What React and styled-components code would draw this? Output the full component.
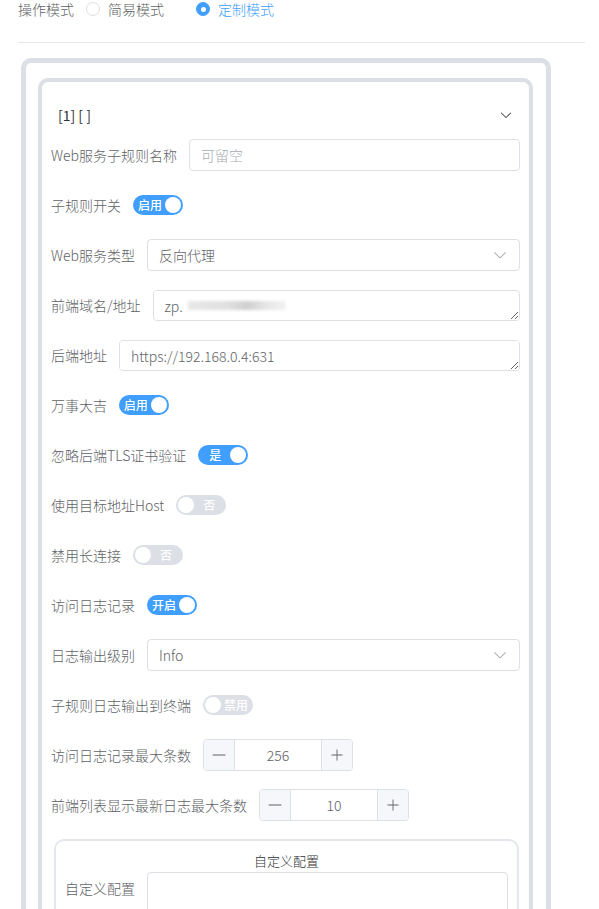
import React from "react";
import styled, { createGlobalStyle } from "styled-components";

const Global = createGlobalStyle`
  html, body { margin: 0; padding: 0; overflow: hidden; background: #fff; }
  body { font-family: "Noto Sans CJK SC", "Liberation Sans", sans-serif; font-size: 14px; font-weight: 300; color: #606266; }
  * { box-sizing: border-box; }
`;

const Page = styled.div`
  padding: 0 14px 0 18px;
`;

const TopRow = styled.div`
  display: flex;
  align-items: center;
  height: 18px;
  line-height: 18px;
  font-size: 14px;
`;

const ModeLabel = styled.span`
  padding-right: 12px;
  color: #606266;
`;

const Radio = styled.label`
  display: inline-flex;
  align-items: center;
  margin-right: 32px;
  color: ${(p) => (p.$checked ? "#409eff" : "#606266")};
`;

const RadioDot = styled.span`
  position: relative;
  width: 14px;
  height: 14px;
  border-radius: 50%;
  border: 1px solid ${(p) => (p.$checked ? "#409eff" : "#dcdfe6")};
  background: ${(p) => (p.$checked ? "#409eff" : "#fff")};
  &::after {
    content: "";
    display: ${(p) => (p.$checked ? "block" : "none")};
    position: absolute;
    left: 50%;
    top: 50%;
    width: 5px;
    height: 5px;
    margin: -2.5px 0 0 -2.5px;
    border-radius: 50%;
    background: #fff;
  }
`;

const RadioText = styled.span`
  padding-left: 8px;
`;

const Divider = styled.div`
  height: 1px;
  margin-top: 24px;
  background: #e4e7ed;
`;

const OuterCard = styled.div`
  margin: 15px 0 0 3px;
  width: 530px;
  border: 5px solid #dcdfe6;
  border-radius: 10px;
  padding: 15px 13px 20px 12px;
`;

const InnerCard = styled.div`
  border: 4px solid #dcdfe6;
  border-radius: 10px;
  padding: 9px 9px;
`;

const Header = styled.div`
  height: 48px;
  display: flex;
  align-items: center;
  justify-content: space-between;
  padding: 0 7px 0 7px;
  font-size: 14px;
  font-weight: 400;
  color: #303133;
`;

const FormRow = styled.div`
  display: flex;
  align-items: flex-start;
  min-height: 32px;
  margin-bottom: 18px;
`;

const Label = styled.div`
  flex: none;
  line-height: 32px;
  padding-right: 12px;
  font-size: 14px;
  color: #606266;
  white-space: nowrap;
`;

const Control = styled.div`
  flex: 1;
  min-width: 0;
  min-height: 32px;
  display: flex;
  align-items: center;
  position: relative;
`;

const TextInput = styled.input`
  width: 100%;
  height: 32px;
  border: 1px solid #dcdfe6;
  border-radius: 4px;
  padding: 0 11px;
  font: inherit;
  font-size: 14px;
  color: #606266;
  outline: none;
  &::placeholder { color: #a8abb2; }
`;

const SelectBox = styled.div`
  width: 100%;
  height: 32px;
  border: 1px solid #dcdfe6;
  border-radius: 4px;
  padding: 0 11px 0 11px;
  display: flex;
  align-items: center;
  justify-content: space-between;
  color: #606266;
  font-size: 14px;
`;

const TextArea = styled.textarea`
  display: block;
  width: 100%;
  height: ${(p) => p.$h || 31}px;
  border: 1px solid #dcdfe6;
  border-radius: 4px;
  padding: 5px 11px;
  line-height: 1.5;
  font: inherit;
  font-size: 14px;
  color: #606266;
  resize: vertical;
  outline: none;
`;

const Redact = styled.span`
  position: absolute;
  left: 35px;
  top: 12px;
  width: 98px;
  height: 9px;
  background: linear-gradient(90deg, #e8e8e8 0%, #e0e0e0 40%, #cfcfcf 60%, #e6e6e6 80%, #f3f3f3 100%);
  filter: blur(1.5px);
  pointer-events: none;
`;

const SwitchTrack = styled.span`
  display: inline-flex;
  align-items: center;
  flex-direction: ${(p) => (p.$on ? "row" : "row-reverse")};
  width: 50px;
  height: 20px;
  padding: 0 2px;
  border-radius: 10px;
  background: ${(p) => (p.$on ? "#409eff" : "#dcdfe6")};
`;

const SwitchText = styled.span`
  flex: 1;
  text-align: center;
  font-size: 12px;
  font-weight: 500;
  line-height: 20px;
  color: #fff;
`;

const Knob = styled.span`
  width: 16px;
  height: 16px;
  border-radius: 50%;
  background: #fff;
  flex: none;
`;

const NumberBox = styled.div`
  display: flex;
  width: 150px;
  height: 32px;
  border: 1px solid #dcdfe6;
  border-radius: 4px;
  overflow: hidden;
`;

const StepBtn = styled.span`
  width: 31px;
  flex: none;
  display: flex;
  align-items: center;
  justify-content: center;
  background: #f5f7fa;
  color: #606266;
  border-${(p) => (p.$side === "left" ? "right" : "left")}: 1px solid #dcdfe6;
`;

const NumberValue = styled.span`
  flex: 1;
  text-align: center;
  line-height: 30px;
  font-size: 14px;
  color: #606266;
`;

const NestedCard = styled.div`
  margin: 0 1px 0 3px;
  border: 2px solid #e4e7ed;
  border-radius: 10px;
  padding: 9px 9px;
`;

const NestedTitle = styled.div`
  text-align: center;
  font-size: 13px;
  line-height: 22px;
  color: #303133;
`;

const ArrowDown = ({ size = 14, color = "#303133" }) => (
  <svg width={size} height={size} viewBox="0 0 1024 1024" fill={color}>
    <path d="M831.872 340.864 512 652.672 192.128 340.864a30.592 30.592 0 0 0-42.752 0 29.12 29.12 0 0 0 0 41.6L489.664 714.24a32 32 0 0 0 44.672 0l340.288-331.712a29.12 29.12 0 0 0 0-41.728 30.592 30.592 0 0 0-42.752 0z" />
  </svg>
);

const MinusIcon = () => (
  <svg width="16" height="16" viewBox="0 0 1024 1024" fill="#606266">
    <path d="M128 544h768a32 32 0 1 0 0-64H128a32 32 0 0 0 0 64z" />
  </svg>
);

const PlusIcon = () => (
  <svg width="14" height="14" viewBox="0 0 1024 1024" fill="#606266">
    <path d="M480 480V128a32 32 0 0 1 64 0v352h352a32 32 0 1 1 0 64H544v352a32 32 0 1 1-64 0V544H128a32 32 0 0 1 0-64h352z" />
  </svg>
);

const Switch = ({ on, text }) => (
  <SwitchTrack $on={on}>
    <SwitchText>{text}</SwitchText>
    <Knob />
  </SwitchTrack>
);

const NumberInput = ({ value }) => (
  <NumberBox>
    <StepBtn $side="left"><MinusIcon /></StepBtn>
    <NumberValue>{value}</NumberValue>
    <StepBtn $side="right"><PlusIcon /></StepBtn>
  </NumberBox>
);

const Select = ({ value }) => (
  <SelectBox>
    <span>{value}</span>
    <ArrowDown size={16} color="#a8abb2" />
  </SelectBox>
);

const Row = ({ label, children }) => (
  <FormRow>
    <Label>{label}</Label>
    <Control>{children}</Control>
  </FormRow>
);

export default function App() {
  return (
    <>
      <Global />
      <Page>
        <TopRow>
          <ModeLabel>操作模式</ModeLabel>
          <Radio>
            <RadioDot />
            <RadioText>简易模式</RadioText>
          </Radio>
          <Radio $checked>
            <RadioDot $checked />
            <RadioText>定制模式</RadioText>
          </Radio>
        </TopRow>
        <Divider />
        <OuterCard>
          <InnerCard>
            <Header>
              <span>[1] [ ]</span>
              <ArrowDown size={14} color="#303133" />
            </Header>
            <Row label="Web服务子规则名称">
              <TextInput placeholder="可留空" readOnly />
            </Row>
            <Row label="子规则开关">
              <Switch on text="启用" />
            </Row>
            <Row label="Web服务类型">
              <Select value="反向代理" />
            </Row>
            <Row label="前端域名/地址">
              <TextArea defaultValue="zp." />
              <Redact />
            </Row>
            <Row label="后端地址">
              <TextArea defaultValue="https://192.168.0.4:631" />
            </Row>
            <Row label="万事大吉">
              <Switch on text="启用" />
            </Row>
            <Row label="忽略后端TLS证书验证">
              <Switch on text="是" />
            </Row>
            <Row label="使用目标地址Host">
              <Switch text="否" />
            </Row>
            <Row label="禁用长连接">
              <Switch text="否" />
            </Row>
            <Row label="访问日志记录">
              <Switch on text="开启" />
            </Row>
            <Row label="日志输出级别">
              <Select value="Info" />
            </Row>
            <Row label="子规则日志输出到终端">
              <Switch text="禁用" />
            </Row>
            <Row label="访问日志记录最大条数">
              <NumberInput value="256" />
            </Row>
            <Row label="前端列表显示最新日志最大条数">
              <NumberInput value="10" />
            </Row>
            <NestedCard>
              <NestedTitle>自定义配置</NestedTitle>
              <Row label="自定义配置">
                <TextArea $h={150} defaultValue="" />
              </Row>
            </NestedCard>
          </InnerCard>
        </OuterCard>
      </Page>
    </>
  );
}
